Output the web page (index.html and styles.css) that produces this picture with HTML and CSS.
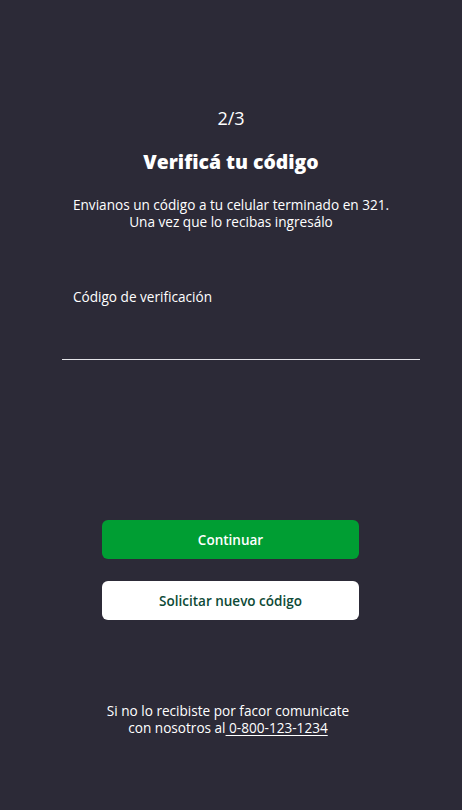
FILE: index.html
```html
<!DOCTYPE html>
<html lang="es">
<head>
<meta charset="utf-8">
<title>Verificá tu código</title>
<link rel="stylesheet" href="styles.css">
</head>
<body>
<main class="screen">
  <p class="step">2/3</p>
  <h1 class="title">Verificá tu código</h1>
  <p class="subtitle">Envianos un código a tu celular terminado en 321.<br>Una vez que lo recibas ingresálo</p>
  <div class="field">
    <label class="field-label" for="code">Código de verificación</label>
    <input class="field-input" id="code" type="text">
  </div>
  <div class="actions">
    <button class="btn btn-primary">Continuar</button>
    <button class="btn btn-secondary">Solicitar nuevo código</button>
  </div>
  <p class="footer">Si no lo recibiste por facor comunicate<br>con nosotros al<a class="phone" href="#"> 0-800-123-1234</a></p>
</main>
</body>
</html>
```
FILE: styles.css
```css
html, body {
  margin: 0;
  padding: 0;
  background: #2c2a37;
}
body {
  font-family: "Open Sans", "Noto Sans", sans-serif;
  color: #ffffff;
}
.screen {
  width: 462px;
  min-height: 810px;
  box-sizing: border-box;
  padding-top: 106px;
  display: flex;
  flex-direction: column;
  align-items: center;
}
.step {
  margin: 0;
  font-size: 18px;
  line-height: 24px;
  font-weight: 400;
}
.title {
  margin: 18px 0 0;
  font-size: 19.4px;
  line-height: 28px;
  font-weight: 800;
}
.subtitle {
  margin: 20px 0 0;
  font-size: 13.6px;
  line-height: 17px;
  text-align: center;
}
.field {
  align-self: stretch;
  margin: 57px 42px 0 62px;
  display: flex;
  flex-direction: column;
}
.field-label {
  font-size: 13.6px;
  line-height: 20px;
  padding-left: 11px;
}
.field-input {
  margin-top: 31px;
  height: 21px;
  padding: 0 11px;
  background: transparent;
  border: 0;
  border-bottom: 1px solid #e4e4e8;
  color: #fff;
  font: inherit;
  outline: none;
}
.actions {
  margin-top: 160px;
  display: flex;
  flex-direction: column;
  gap: 22px;
}
.btn {
  width: 257px;
  height: 39px;
  margin-left: -1px;
  border-radius: 6px;
  border: 0;
  font-family: "Open Sans", "Noto Sans", sans-serif;
  font-size: 13.5px;
  font-weight: 600;
  cursor: pointer;
}
.btn-primary {
  background: #009e33;
  color: #ffffff;
}
.btn-secondary {
  background: #ffffff;
  color: #0d4a36;
}
.footer {
  margin: 82px 0 0;
  padding-right: 6px;
  font-size: 13.6px;
  line-height: 17px;
  text-align: center;
}
.phone {
  color: #ffffff;
  text-decoration: underline;
  text-underline-offset: 2px;
}
```
